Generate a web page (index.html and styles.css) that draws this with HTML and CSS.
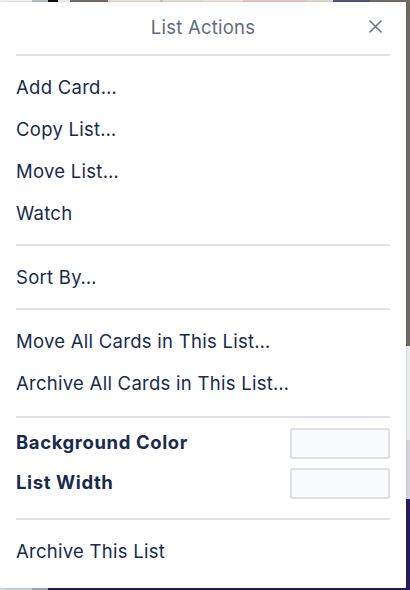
FILE: index.html
```html
<!DOCTYPE html>
<html lang="en">
<head>
<meta charset="utf-8">
<title>List Actions</title>
<link rel="stylesheet" href="styles.css">
</head>
<body>
<div class="popover">
  <header class="pop-header">
    <span class="pop-title">List Actions</span>
    <button class="pop-close" aria-label="Close">
      <svg width="13" height="13" viewBox="0 0 13 13"><path d="M1 1 L12 12 M12 1 L1 12" stroke="#6b778c" stroke-width="1.6" stroke-linecap="round" fill="none"/></svg>
    </button>
  </header>
  <hr class="divider">
  <ul class="section">
    <li class="item">Add Card…</li>
    <li class="item">Copy List…</li>
    <li class="item">Move List…</li>
    <li class="item">Watch</li>
  </ul>
  <hr class="divider">
  <ul class="section">
    <li class="item">Sort By…</li>
  </ul>
  <hr class="divider">
  <ul class="section section-wide">
    <li class="item">Move All Cards in This List…</li>
    <li class="item">Archive All Cards in This List…</li>
  </ul>
  <hr class="divider">
  <div class="section settings">
    <div class="setting"><span class="setting-label">Background Color</span><span class="field"></span></div>
    <div class="setting"><span class="setting-label">List Width</span><span class="field"></span></div>
  </div>
  <hr class="divider">
  <ul class="section">
    <li class="item">Archive This List</li>
  </ul>
</div>
</body>
</html>
```
FILE: styles.css
```css
* { box-sizing: border-box; }
html, body { margin: 0; height: 100%; }
body {
  width: 410px;
  height: 590px;
  overflow: hidden;
  font-family: Inter, "Liberation Sans", sans-serif;
  background:
    linear-gradient(to right,
      #eff0f2 0, #eff0f2 32px, #b7becb 32px, #b7becb 48px, #111 48px, #111 58px,
      #eeeff1 58px, #eeeff1 70px, #766c62 70px, #766c62 108px, #e8dfcc 108px, #e8dfcc 160px,
      #cbbfa8 160px, #cbbfa8 163px, #e6dcc8 163px, #e6dcc8 203px, #ede6d8 203px, #ede6d8 243px,
      #e4c6c3 243px, #e4c6c3 307px, #e3d9c8 307px, #e3d9c8 333px, #4c5a77 333px, #4c5a77 370px,
      #736a61 370px) top / 100% 2px no-repeat,
    linear-gradient(to right, #e7e8eb 0, #e7e8eb 32px, #b4bbc9 32px, #b4bbc9 48px, #2a1a5b 48px) bottom / 100% 2px no-repeat,
    linear-gradient(to bottom, #736a61 0, #736a61 346px, #f1f2f4 346px, #f1f2f4 440px, #d9dce1 440px, #d9dce1 499px, #2b1b5c 499px) right / 4px 100% no-repeat,
    #ffffff;
  padding: 2px 4px 2px 0;
}
.popover {
  width: 406px;
  height: 586px;
  background: #fff;
  border-radius: 3px;
  box-shadow: 0 0 0 1px rgba(9,30,66,.06), 0 4px 8px -2px rgba(9,30,66,.2);
  padding: 0 16px;
  display: flex;
  flex-direction: column;
}
.pop-header {
  height: 52px;
  display: flex;
  align-items: center;
  justify-content: center;
  position: relative;
}
.pop-title {
  font-size: 18.5px;
  color: #5e6c84;
  letter-spacing: 0.25px;
  margin-top: -2px;
}
.pop-close {
  position: absolute;
  right: 8px;
  top: 18px;
  width: 13px;
  height: 13px;
  padding: 0;
  border: 0;
  background: none;
  display: flex;
}
.divider {
  margin: 0;
  border: 0;
  height: 2px;
  background: #dfe1e6;
  flex: none;
}
.section {
  list-style: none;
  margin: 0;
  padding: 10px 0;
}
.section-wide { padding-bottom: 12px; }
.item {
  height: 42px;
  display: flex;
  align-items: center;
  font-size: 18.5px;
  color: #172b4d;
  letter-spacing: 0.27px;
}
.settings {
  padding: 10px 0 19px;
  display: flex;
  flex-direction: column;
  gap: 9px;
}
.setting {
  height: 31px;
  display: flex;
  align-items: center;
  justify-content: space-between;
}
.setting-label {
  font-size: 18.5px;
  font-weight: 700;
  color: #172b4d;
  letter-spacing: 0.6px;
  margin-top: -4px;
}
.field {
  width: 100px;
  height: 31px;
  border: 2px solid #dfe1e6;
  border-radius: 3px;
  background: #fafbfc;
}
```
